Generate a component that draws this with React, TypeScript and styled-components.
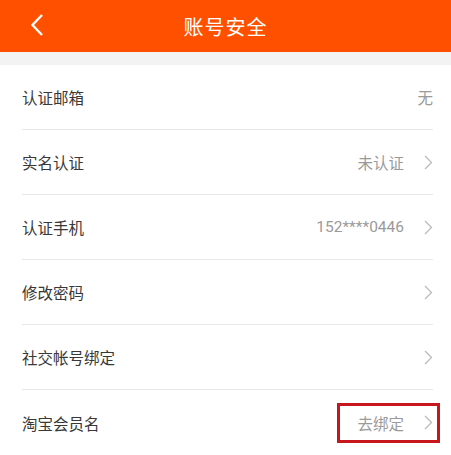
import React from "react";
import styled, { createGlobalStyle } from "styled-components";

const GlobalStyle = createGlobalStyle`
  html, body {
    margin: 0;
    padding: 0;
    background: #ffffff;
  }
  body {
    font-family: "Roboto", "Noto Sans CJK SC", sans-serif;
  }
`;

const Page = styled.div`
  width: 451px;
  height: 455px;
  overflow: hidden;
  background: #ffffff;
`;

const Header = styled.header`
  height: 52px;
  background: #ff5000;
  display: flex;
  align-items: center;
  justify-content: center;
  position: relative;
`;

const BackButton = styled.button`
  position: absolute;
  left: 22px;
  top: 10px;
  width: 30px;
  height: 30px;
  border: none;
  background: none;
  padding: 0;
  display: flex;
  align-items: center;
  justify-content: center;
`;

const Title = styled.h1`
  margin: 0;
  color: #ffffff;
  font-size: 20px;
  font-weight: 400;
  letter-spacing: 1px;
`;

const Spacer = styled.div`
  height: 13px;
  background: #f3f3f3;
`;

const List = styled.ul`
  margin: 0;
  padding: 0 18px 0 22px;
  list-style: none;
`;

const Row = styled.li`
  height: 65px;
  display: flex;
  align-items: center;
  justify-content: space-between;
  border-bottom: 1px solid #e8e8e8;
  box-sizing: border-box;
  &:last-child {
    border-bottom: none;
  }
`;

const Label = styled.span`
  color: #383838;
  font-size: 15.5px;
`;

const Right = styled.div<{ $boxed?: boolean }>`
  display: flex;
  align-items: center;
  gap: 20px;
  ${(p) =>
    p.$boxed &&
    `
    outline: 3px solid #c8161d;
    outline-offset: 0;
    padding: 6px 4px 6px 17px;
    margin-right: -4px;
  `}
`;

const Value = styled.span`
  color: #9a9a9a;
  font-size: 15.5px;
`;

const Chevron = () => (
  <svg width="9" height="15" viewBox="0 0 9 15">
    <path d="M1 1 L7.5 7.5 L1 14" fill="none" stroke="#bbbbbb" strokeWidth="1.3" />
  </svg>
);

const rows = [
  { label: "认证邮箱", value: "无", arrow: false },
  { label: "实名认证", value: "未认证", arrow: true },
  { label: "认证手机", value: "152****0446", arrow: true },
  { label: "修改密码", value: "", arrow: true },
  { label: "社交帐号绑定", value: "", arrow: true },
  { label: "淘宝会员名", value: "去绑定", arrow: true, boxed: true },
];

export default function App() {
  return (
    <Page>
      <GlobalStyle />
      <Header>
        <BackButton>
          <svg width="14" height="24" viewBox="0 0 14 24">
            <path d="M12 2 L2.5 12 L12 22" fill="none" stroke="#ffffff" strokeWidth="2.4" />
          </svg>
        </BackButton>
        <Title>账号安全</Title>
      </Header>
      <Spacer />
      <List>
        {rows.map((r) => (
          <Row key={r.label}>
            <Label>{r.label}</Label>
            <Right $boxed={r.boxed}>
              {r.value && <Value>{r.value}</Value>}
              {r.arrow && <Chevron />}
            </Right>
          </Row>
        ))}
      </List>
    </Page>
  );
}
